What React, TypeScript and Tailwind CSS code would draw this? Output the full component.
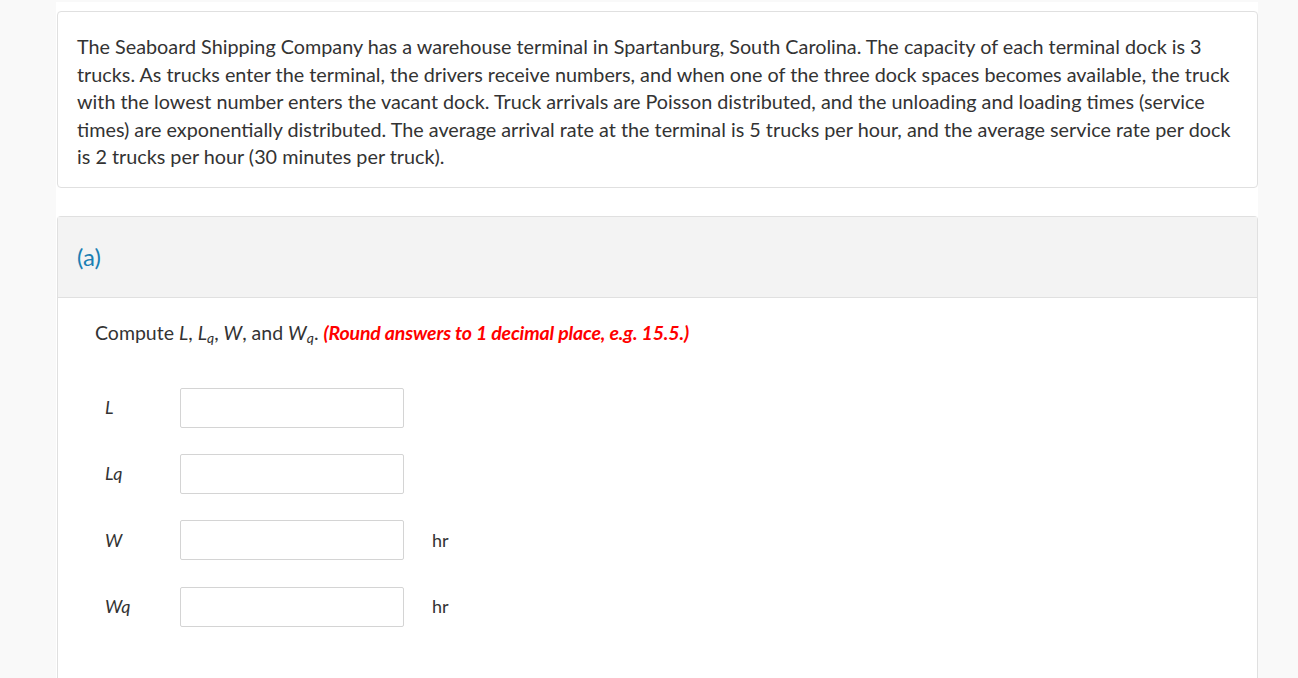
import React from 'react';

const rows = [
  { label: 'L', unit: '' },
  { label: 'Lq', unit: '' },
  { label: 'W', unit: 'hr' },
  { label: 'Wq', unit: 'hr' },
];

export default function App() {
  return (
    <div className="min-h-screen bg-[#f9f9f9] pt-[2px]" style={{ fontFamily: 'Lato, "Open Sans", sans-serif' }}>
      <div className="ml-[56px] w-[1202px] min-h-[676px] bg-white pt-[9px]">
        {/* Question text */}
        <div className="ml-[1px] w-[1201px] rounded-[4px] border border-[#e0e0e0] px-[19px] pt-[21px] pb-[16px] text-[19.8px] leading-[27.5px] text-[#333]">
          The Seaboard Shipping Company has a warehouse terminal in Spartanburg, South Carolina. The capacity of each terminal dock is 3<br />
          trucks. As trucks enter the terminal, the drivers receive numbers, and when one of the three dock spaces becomes available, the truck<br />
          with the lowest number enters the vacant dock. Truck arrivals are Poisson distributed, and the unloading and loading times (service<br />
          times) are exponentially distributed. The average arrival rate at the terminal is 5 trucks per hour, and the average service rate per dock<br />
          is 2 trucks per hour (30 minutes per truck).
        </div>

        {/* Part (a) */}
        <div className="mt-[28px] ml-[1px] w-[1201px] rounded-t-[4px] border border-b-0 border-[#e0e0e0]">
          <div className="flex h-[81px] items-center border-b border-[#e0e0e0] bg-[#f3f3f3] px-[19px]">
            <span className="text-[24px] text-[#1b7fb3]">(a)</span>
          </div>
          <div className="px-[37px] pt-[21px] pb-[60px]">
            <p className="text-[19.5px] leading-[28px] text-[#333]">
              Compute <i>L</i>, <i>L<sub className="text-[14px]">q</sub></i>, <i>W</i>, and{' '}
              <i>W<sub className="text-[14px]">q</sub></i>.{' '}
              <b className="italic tracking-[-0.15px] text-[#ff0000]">(Round answers to 1 decimal place, e.g. 15.5.)</b>
            </p>
            <div className="mt-[41px] flex flex-col gap-[26.4px]">
              {rows.map((r) => (
                <div key={r.label} className="flex items-center">
                  <span className="w-[85px] pl-[10px] text-[18px] italic text-[#333]">{r.label}</span>
                  <input
                    type="text"
                    className="h-[40px] w-[224px] rounded-[2px] border border-[#d4d4d4] bg-white outline-none"
                  />
                  {r.unit && <span className="ml-[28px] text-[18px] text-[#333]">{r.unit}</span>}
                </div>
              ))}
            </div>
          </div>
        </div>
      </div>
    </div>
  );
}
